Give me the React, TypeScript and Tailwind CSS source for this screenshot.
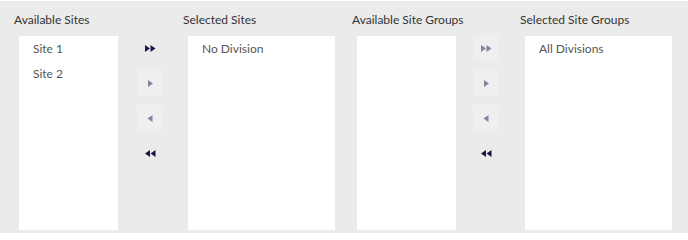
import React from 'react';

type Dir = 'allRight' | 'right' | 'left' | 'allLeft';

const Arrow = ({ dir, active }: { dir: Dir; active: boolean }) => {
  const fill = active ? '#1c1547' : '#8b7f9e';
  const paths: Record<Dir, string> = {
    allRight: 'M0 0 L5 3.5 L0 7 Z M5.5 0 L10.5 3.5 L5.5 7 Z',
    right: 'M3 0 L8 3.5 L3 7 Z',
    left: 'M7.5 0 L2.5 3.5 L7.5 7 Z',
    allLeft: 'M5 0 L0 3.5 L5 7 Z M10.5 0 L5.5 3.5 L10.5 7 Z',
  };
  return (
    <button
      className={`w-[26px] h-[26px] flex items-center justify-center ${active ? '' : 'bg-[#efefef]'}`}
    >
      <svg width="11" height="7" viewBox="0 0 11 7">
        <path d={paths[dir]} fill={fill} />
      </svg>
    </button>
  );
};

const ListColumn = ({
  label,
  items,
  colWidth,
  boxWidth,
}: {
  label: string;
  items: string[];
  colWidth: string;
  boxWidth: string;
}) => (
  <div className={`flex flex-col shrink-0 ${colWidth}`}>
    <div className="h-4 leading-4 text-[12px] text-[#333] whitespace-nowrap">{label}</div>
    <div className={`${boxWidth} h-[194px] ml-[5px] mt-2 bg-white pl-[14px]`}>
      {items.map((it) => (
        <div key={it} className="leading-[25px] text-[12px] text-[#555]">
          {it}
        </div>
      ))}
    </div>
  </div>
);

const Buttons = ({ states }: { states: boolean[] }) => (
  <div className="flex flex-col gap-[9px] pt-[23px] shrink-0">
    <Arrow dir="allRight" active={states[0]} />
    <Arrow dir="right" active={states[1]} />
    <Arrow dir="left" active={states[2]} />
    <Arrow dir="allLeft" active={states[3]} />
  </div>
);

export default function App() {
  return (
    <div className="w-[688px] h-[240px] bg-white" style={{ fontFamily: 'Lato, sans-serif' }}>
      <div className="h-[233px] bg-[#ebebeb] border-t border-white flex pl-[14px] pt-[11px]">
        <ListColumn label="Available Sites" items={['Site 1', 'Site 2']} colWidth="w-[104px]" boxWidth="w-[99px]" />
        <div className="ml-[19px]">
          <Buttons states={[true, false, false, true]} />
        </div>
        <div className="ml-[20px]">
          <ListColumn label="Selected Sites" items={['No Division']} colWidth="w-[152px]" boxWidth="w-[147px]" />
        </div>
        <div className="ml-[17px]">
          <ListColumn label="Available Site Groups" items={[]} colWidth="w-[104px]" boxWidth="w-[99px]" />
        </div>
        <div className="ml-[17px]">
          <Buttons states={[false, false, false, true]} />
        </div>
        <div className="ml-[21px]">
          <ListColumn label="Selected Site Groups" items={['All Divisions']} colWidth="w-[152px]" boxWidth="w-[147px]" />
        </div>
      </div>
    </div>
  );
}
